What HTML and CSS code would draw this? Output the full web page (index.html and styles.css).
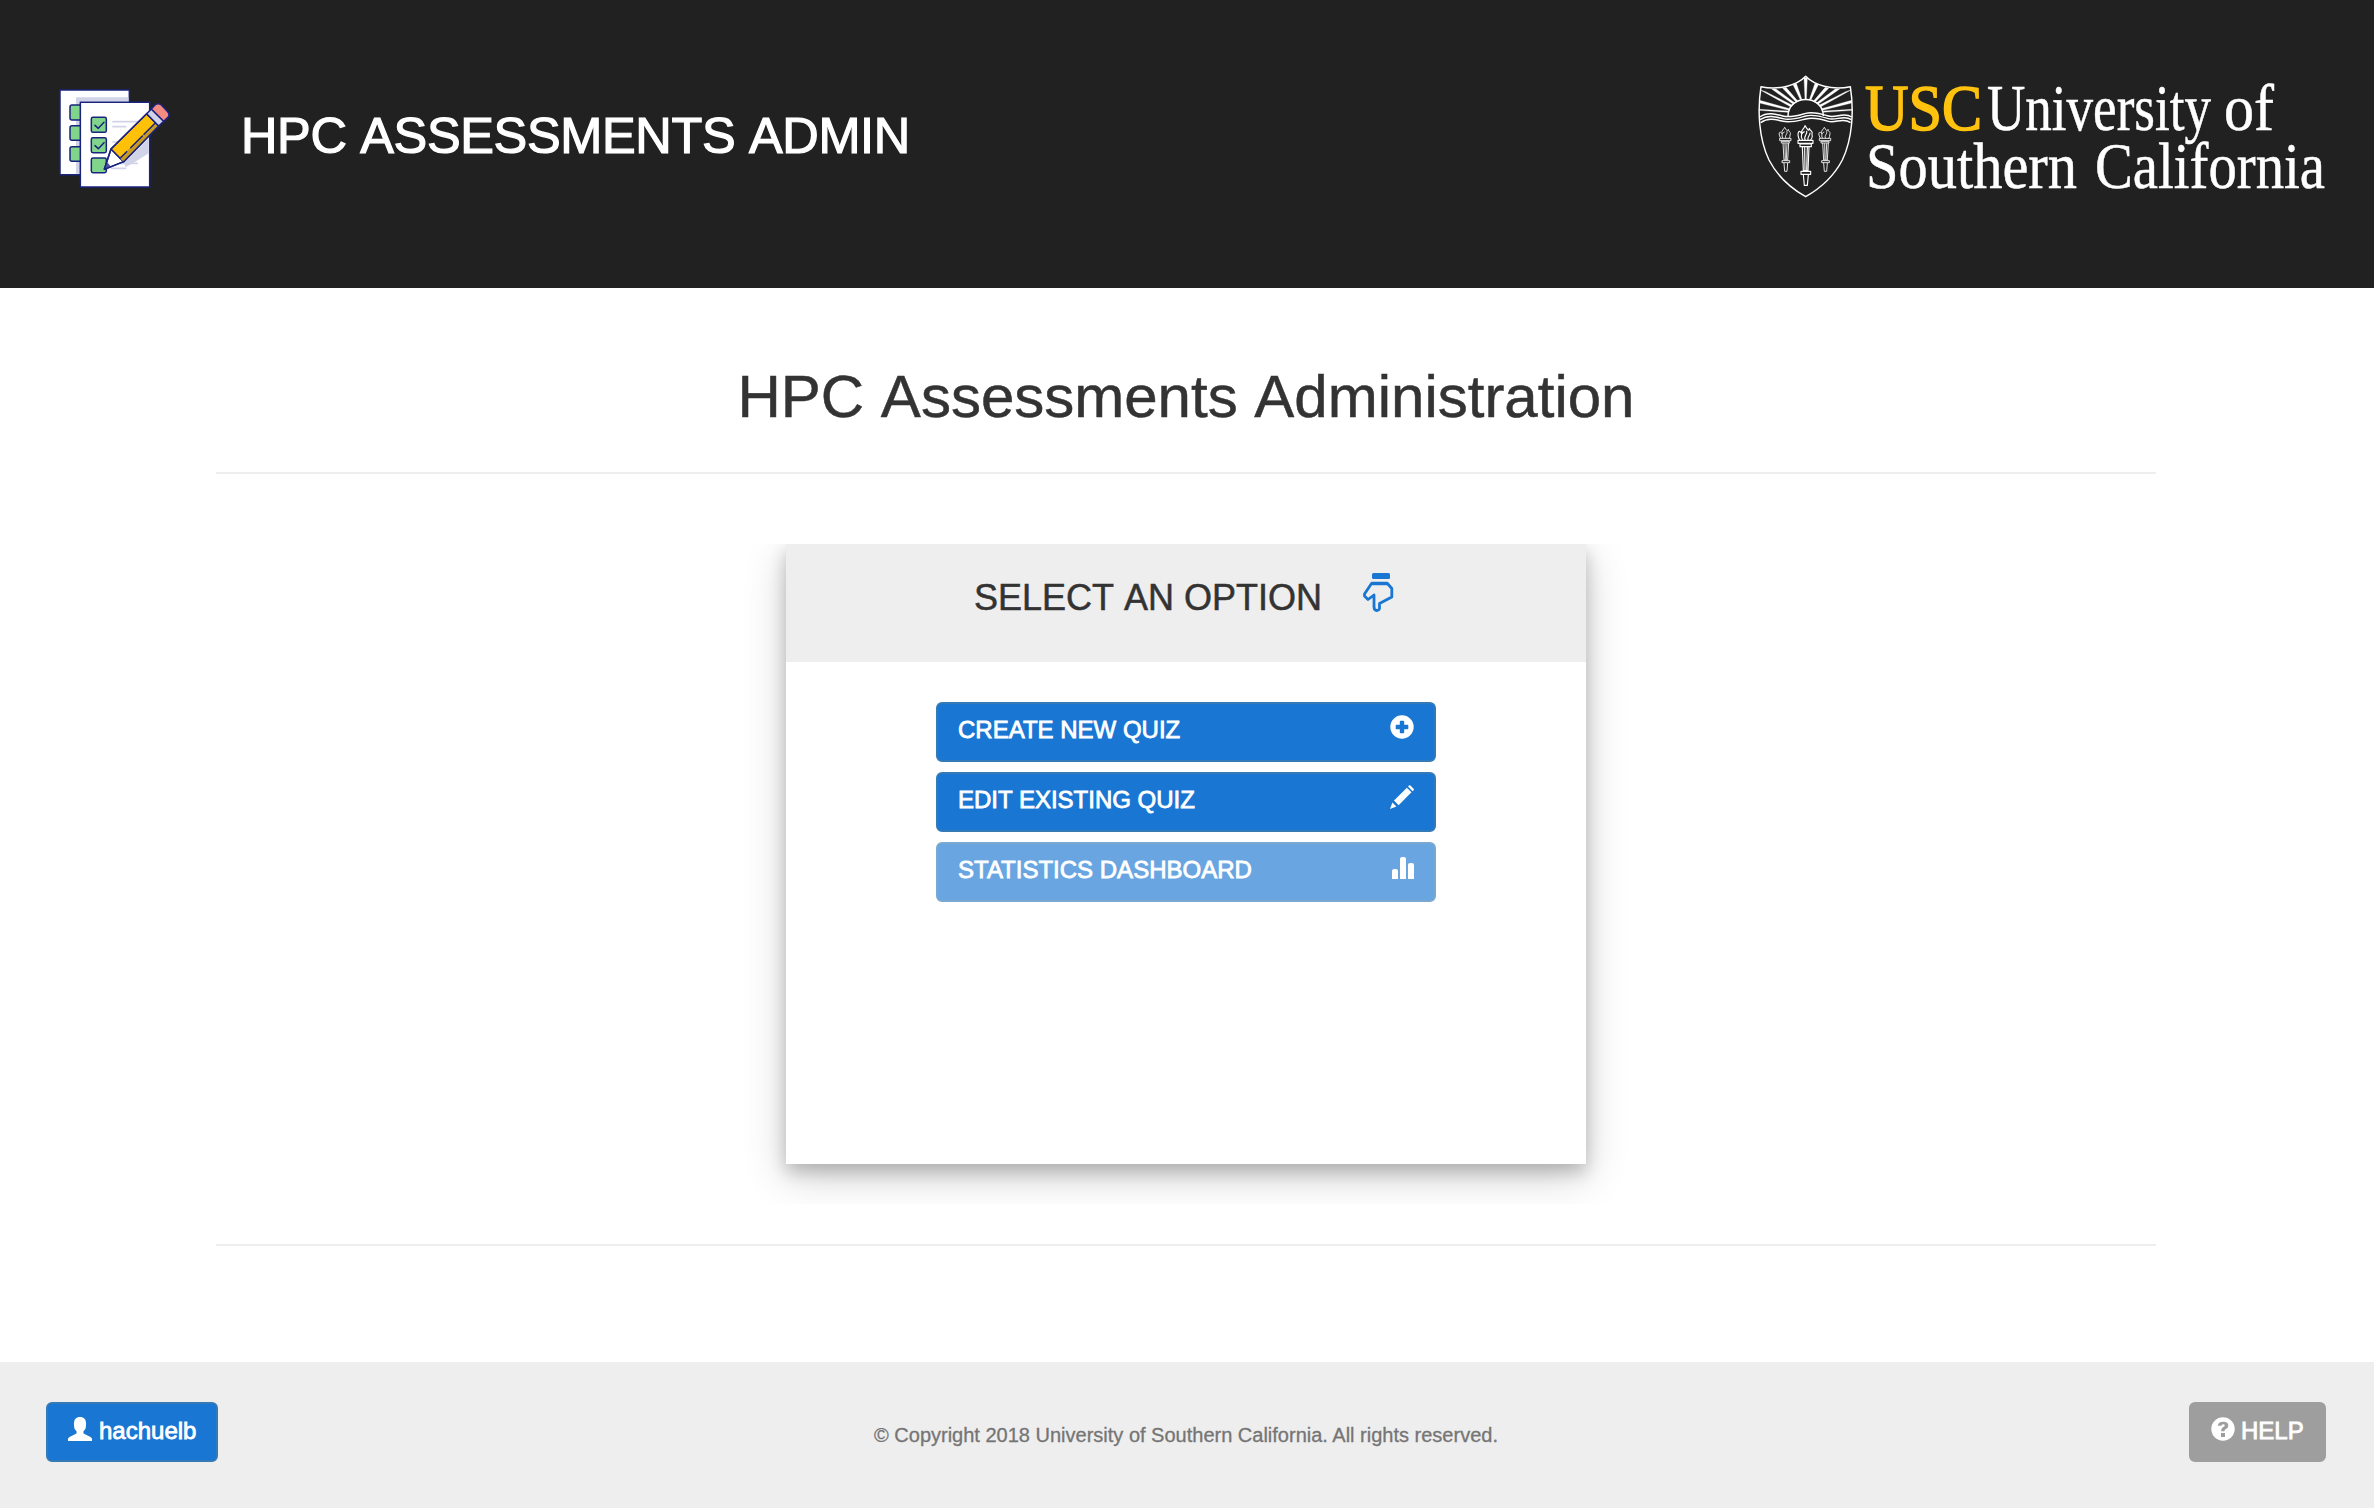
FILE: index.html
```html
<!DOCTYPE html>
<html lang="en">
<head>
<meta charset="utf-8">
<title>HPC Assessments Administration</title>
<link rel="stylesheet" href="styles.css">
</head>
<body>
<header class="topbar">
  <svg class="app-logo" viewBox="0 0 450 390" stroke="#1a237e" stroke-width="4.5" stroke-linejoin="round" stroke-linecap="round">
    <rect x="60" y="60" width="208" height="254" fill="#fff"/>
    <path d="M108 311V82H265V95H121V311Z" fill="#d1d3e8" stroke="none"/>
    <g fill="#81d58b"><rect x="90" y="105" width="50" height="45" rx="6"/><rect x="90" y="167" width="50" height="44" rx="6"/><rect x="90" y="230" width="50" height="44" rx="6"/></g>
    <rect x="121" y="97" width="208" height="254" fill="#fff"/>
    <path d="M219 155H300M219 170H257M219 216H290M219 231H250M200 280H292M215 295H257" stroke="#d1d3e8" stroke-width="5"/>
    <path d="M252 278L326 205V250Q290 274 257 292Z" fill="#d1d3e8" stroke="none"/>
    <g fill="#81d58b"><rect x="154" y="142" width="45" height="45" rx="5"/><rect x="154" y="203" width="45" height="45" rx="5"/><rect x="154" y="264" width="45" height="44" rx="5"/></g>
    <path d="M165 166L175 175L192 157M165 227L175 236L192 218" fill="none"/>
    <path d="M193 298L213 237L251 275Z" fill="#fff"/>
    <path d="M193 298L200 275L214 291Z" fill="#4a55a0" stroke="none"/>
    <path d="M213 237L320 131L356 168L251 275Z" fill="#ffc107"/>
    <path d="M239 265L345 158L355 168L251 275Z" fill="#c99b21" stroke="none"/>
    <path d="M193 298L213 237L320 131L356 168L251 275Z" fill="none"/>
    <path d="M240 265L260 245M272 233L307 198M312 193L345 160" fill="none"/>
    <path d="M320 131L334 117L371 154L356 168Z" fill="#d1d3e8"/>
    <path d="M334 117L345 105Q354 97 364 105L383 125Q391 134 383 143L371 154Z" fill="#f28b82"/>
  </svg>
  <div class="app-name">HPC ASSESSMENTS ADMIN</div>
  <svg class="brand" viewBox="0 0 600 150">
    <g transform="scale(.333333)" fill="none" stroke="#fff" stroke-width="4.4" stroke-linejoin="round">
      <path d="M197 49C172 75 118 92 63 80C52 150 56 235 87 300C112 348 153 385 197 410C241 385 282 348 307 300C338 235 342 150 331 80C276 92 222 75 197 49Z"/>
      <path d="M144 168C145 102 249 102 250 168"/>
      <g fill="#fff" stroke="#fff" stroke-width="1">
        <path d="M192 53H202L199 118H195ZM159 74L169 70L186 119H181ZM235 74L225 70L208 119H213ZM128 85L138 82L174 124L169 127ZM266 85L256 82L220 124L225 127ZM95 87L108 87L165 129L160 133ZM299 87L286 87L229 129L234 133ZM61 90L77 95L157 136L153 141ZM333 90L317 95L237 136L241 141ZM59 121V129L147 151L149 146ZM335 121V129L247 151L245 146ZM57 148V151L144 157V153ZM337 148V151L250 157V153Z"/>
      </g>
      <path d="M59 171C82 155 107 162 129 168S175 166 197 160S243 161 265 168S312 155 335 171M60 179C84 163 107 170 129 176S175 174 197 168S243 169 265 176S312 163 334 179M62 188C86 171 107 179 129 184S175 182 197 177S243 177 265 184S308 171 332 188"/>
      <g id="side-torch" stroke-width="2.6">
        <path d="M122 235C112 217 121 212 126 221C124 209 131 210 134 202C141 214 143 215 145 208C148 220 154 214 150 225C150 232 148 235 146 235M129 235C122 225 130 216 134 216M138 235C132 226 145 222 140 214"/>
        <path d="M119 235H153V242H119ZM124 244H148V249H124ZM129 249L132 300H143L146 249M135 250L136 299M141 250L139 299M126 302H149V308H126ZM132 309L134 334H141L143 309"/>
      </g>
      <use href="#side-torch" x="119"/>
      <g stroke-width="3.400">
        <path d="M179 241C168 217 179 207 184 220C184 208 193 207 195 197C205 213 207 213 208 205C211 217 220 210 216 224C219 231 213 241 209 241M188 241C178 228 187 216 194 215M196 241C188 230 204 222 200 212M204 241C200 230 212 226 210 218"/>
        <path d="M174 241H219V250H174ZM180 252H214V260H180ZM187 260L190 332H204L207 260M194 262L195 331M202 262L200 331M183 334H212V343H183ZM190 344L193 376H202L205 344"/>
      </g>
    </g>
    <g class="brand-text">
      <text class="brand-usc" x="125" y="70" textLength="117" lengthAdjust="spacingAndGlyphs">USC</text>
      <text x="247" y="70" textLength="224" lengthAdjust="spacingAndGlyphs">University</text>
      <text x="484" y="70" textLength="50" lengthAdjust="spacingAndGlyphs">of</text>
      <text x="126" y="127.500" textLength="211" lengthAdjust="spacingAndGlyphs">Southern</text>
      <text x="355" y="127.500" textLength="230" lengthAdjust="spacingAndGlyphs">California</text>
    </g>
  </svg>
</header>
<main class="content">
  <h1 class="page-title">HPC Assessments Administration</h1>
  <hr class="rule">
  <div class="stage">
    <section class="card">
      <div class="card-head">
        <h2 class="card-title">SELECT AN OPTION</h2>
        <svg class="hand" viewBox="0 0 32 40" fill="none" stroke="#1976d2" stroke-width="3" stroke-linejoin="round">
          <rect x="10" y="1" width="18" height="6" rx="1.500" fill="#1976d2" stroke="none"/>
          <path d="M9.500 11.500H25.500L29.800 16.500V25L17.500 31.500V36.500Q17 38.500 14.800 38.500Q12 38.500 12 34.500V23L6 27.500L2.500 24V22Z" stroke-width="2.800"/><path d="M9.500 11.500H25.500" stroke-width="3.500"/>
        </svg>
      </div>
      <div class="options">
        <button class="btn option">CREATE NEW QUIZ
          <svg class="icon" viewBox="0 0 24 24" fill="currentColor"><path fill-rule="evenodd" d="M12 .3a11.700 11.700 0 1 0 0 23.400a11.700 11.700 0 1 0 0-23.400ZM10.500 5.700h3a.7.7 0 0 1 .7.700V9.800h3.400a.7.7 0 0 1 .7.700v3a.7.7 0 0 1-.7.700H14.200v3.400a.7.7 0 0 1-.7.700h-3a.7.7 0 0 1-.7-.7V14.200H6.400a.7.7 0 0 1-.7-.7v-3a.7.7 0 0 1 .7-.7H9.800V6.400a.7.7 0 0 1 .7-.7Z"/></svg>
        </button>
        <button class="btn option">EDIT EXISTING QUIZ
          <svg class="icon" viewBox="0 0 24 24" fill="currentColor"><path d="M16.900 2.700L21.500 7.300L8.600 20.200L4 15.600ZM18 1.600L19 .6Q19.700 0 20.400.6L23.600 3.800Q24.200 4.500 23.600 5.200L22.600 6.200ZM2.400 17.600L6.400 21.600L0 24Z"/></svg>
        </button>
        <button class="btn option is-disabled">STATISTICS DASHBOARD
          <svg class="icon" viewBox="0 0 24 24" fill="currentColor"><path d="M2 24V16Q2 14 4 14H6Q8 14 8 16V24ZM10 24V4Q10 2 12 2H14Q16 2 16 4V24ZM18 24V10Q18 8 20 8H22Q24 8 24 10V24Z"/></svg>
        </button>
      </div>
    </section>
  </div>
  <hr class="rule">
</main>
<footer class="footer">
  <button class="btn user"><svg class="icon" viewBox="0 0 24 24" fill="currentColor"><path d="M12 0C8 0 6 2.300 6 6.500V9Q6 12.500 8.500 14.300V16.500L1.500 20Q0 21 0 22V24H24V22Q24 21 22.500 20L15.500 16.500V14.300Q18 12.500 18 9V6.500C18 2.300 16 0 12 0Z"/></svg><span class="user-name">hachuelb</span></button>
  <p class="copyright">© Copyright 2018 University of Southern California. All rights reserved.</p>
  <button class="btn help"><svg class="icon" viewBox="0 0 24 24"><circle cx="12" cy="12" r="11.700" fill="currentColor"/><path d="M6.900 8.800H10.300Q10.500 7.300 12.200 7.300Q13.800 7.300 13.800 8.500Q13.800 9.300 12 10.200Q10.200 11.200 10.200 13.500V14.300H13.500V13.600Q13.500 12.800 15 12Q17.300 10.700 17.300 8.400Q17.300 4.700 12.200 4.700Q7.100 4.700 6.900 8.800ZM10 16H14V20H10Z" fill="#9e9e9e"/></svg><span class="help-label">HELP</span></button>
</footer>
</body>
</html>
```
FILE: styles.css
```css
* { box-sizing: border-box; }
body {
  margin: 0;
  min-height: 1508px;
  display: flex;
  flex-direction: column;
  background: #fff;
  color: #333;
  font-family: "Liberation Sans", Arial, sans-serif;
}
.topbar {
  height: 288px;
  padding: 0 34px 0 40px;
  display: flex;
  align-items: flex-start;
  background: #212121;
}
.app-logo { width: 150px; height: 130px; margin-top: 70px; }
.app-name {
  margin: 106px auto 0 51px;
  font-size: 50.500px;
  line-height: 60px;
  letter-spacing: -.35px;
  font-kerning: none;
  color: #fff;
  white-space: nowrap;
  -webkit-text-stroke: 1.200px #fff;
}
.brand { width: 600px; height: 150px; margin-top: 60px; overflow: visible; }
.brand-text { font: 66px "Liberation Serif", "Times New Roman", serif; fill: #fff; stroke: #fff; stroke-width: .5px; }
.brand-usc { fill: #ffc20e; stroke: #ffc20e; stroke-width: 1.600px; }
.content { height: 1074px; width: 1940px; margin: 0 218px 0 216px; padding-top: 76px; }
.page-title {
  margin: 0 0 42px;
  text-align: center;
  font-size: 60px;
  font-weight: 400;
  line-height: 66px;
  font-kerning: none;
  -webkit-text-stroke: .5px #333;
}
.rule { margin: 0; border: 0; height: 2px; background: #eee; }
.stage { margin-top: 70px; padding-bottom: 40px; margin-bottom: 40px; overflow: hidden; }
.card {
  width: 800px;
  height: 620px;
  margin: 0 auto;
  background: #fff;
  box-shadow: 0 8px 16px rgba(0, 0, 0, .2), 0 12px 40px rgba(0, 0, 0, .19);
}
.card-head {
  height: 118px;
  padding: 28px 0 0 188px;
  display: flex;
  align-items: flex-start;
  background: #eee;
}
.card-title {
  width: 388px;
  margin: 6px 0 0;
  font-size: 36px;
  font-weight: 400;
  line-height: 40px;
  font-kerning: none;
  white-space: nowrap;
  -webkit-text-stroke: .5px #333;
}
.hand { width: 32px; height: 40px; }
.options { display: flex; flex-direction: column; gap: 10px; width: 500px; margin: 40px auto 0; }
.btn {
  height: 60px;
  border: 2px solid #337ab7;
  border-radius: 6px;
  padding: 11px 20px 0;
  display: flex;
  align-items: flex-start;
  background: #1976d2;
  color: #fff;
  font: 24px/30px "Liberation Sans", Arial, sans-serif;
  -webkit-text-stroke: .8px #fff;
  white-space: nowrap;
}
.option { justify-content: space-between; }
.is-disabled { opacity: .65; }
.icon { width: 24px; height: 24px; flex: none; }
.footer {
  height: 146px;
  padding: 40px 48px 0 46px;
  display: grid;
  grid-template-columns: 1fr auto 1fr;
  background: #eee;
}
.user, .help { margin: 0; padding-top: 12px; }
.user { width: 172px; gap: 7px; }
.user .icon, .help .icon { margin-top: 1px; }
.help { width: 137px; gap: 6px; justify-self: end; border-color: #9e9e9e; background: #9e9e9e; }
.copyright {
  margin: 18px 0 0;
  font-size: 20px;
  line-height: 30px;
  color: #757575;
  white-space: nowrap;
  -webkit-text-stroke: .3px #757575;
}
```
